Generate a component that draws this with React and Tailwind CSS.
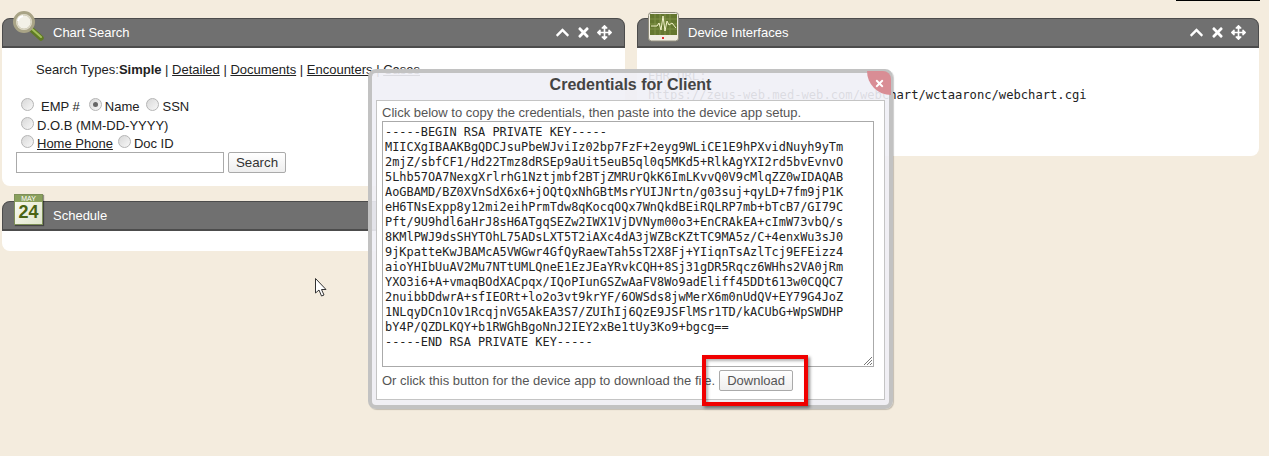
import React from 'react';
import { FaChevronUp, FaTimes, FaArrowsAlt } from 'react-icons/fa';

const keyLines = [
  '-----BEGIN RSA PRIVATE KEY-----',
  'MIICXgIBAAKBgQDCJsuPbeWJviIz02bp7FzF+2eyg9WLiCE1E9hPXvidNuyh9yTm',
  '2mjZ/sbfCF1/Hd22Tmz8dRSEp9aUit5euB5ql0q5MKd5+RlkAgYXI2rd5bvEvnvO',
  '5Lhb57OA7NexgXrlrhG1Nztjmbf2BTjZMRUrQkK6ImLKvvQ0V9cMlqZZ0wIDAQAB',
  'AoGBAMD/BZ0XVnSdX6x6+jOQtQxNhGBtMsrYUIJNrtn/g03suj+qyLD+7fm9jP1K',
  'eH6TNsExpp8y12mi2eihPrmTdw8qKocqOQx7WnQkdBEiRQLRP7mb+bTcB7/GI79C',
  'Pft/9U9hdl6aHrJ8sH6ATgqSEZw2IWX1VjDVNym00o3+EnCRAkEA+cImW73vbQ/s',
  '8KMlPWJ9dsSHYTOhL75ADsLXT5T2iAXc4dA3jWZBcKZtTC9MA5z/C+4enxWu3sJ0',
  '9jKpatteKwJBAMcA5VWGwr4GfQyRaewTah5sT2X8Fj+YIiqnTsAzlTcj9EFEizz4',
  'aioYHIbUuAV2Mu7NTtUMLQneE1EzJEaYRvkCQH+8Sj31gDR5Rqcz6WHhs2VA0jRm',
  'YXO3i6+A+vmaqBOdXACpqx/IQoPIunGSZwAaFV8Wo9adEliff45DDt613w0CQQC7',
  '2nuibbDdwrA+sfIEORt+lo2o3vt9krYF/6OWSds8jwMerX6m0nUdQV+EY79G4JoZ',
  '1NLqyDCn1Ov1RcqjnVG5AkEA3S7/ZUIhIj6QzE9JSFlMSr1TD/kACUbG+WpSWDHP',
  'bY4P/QZDLKQY+b1RWGhBgoNnJ2IEY2xBe1tUy3Ko9+bgcg==',
  '-----END RSA PRIVATE KEY-----',
];

// Little gray radio, the native one doesn't look like the old browser's
const Radio = ({ checked }) => (
  <span className="relative top-[-2px] inline-flex h-[13px] w-[13px] shrink-0 items-center justify-center rounded-full border border-[#b5b5b5] bg-gradient-to-br from-[#d8d8d8] to-[#f8f8f8]">
    {checked && <span className="h-[5px] w-[5px] rounded-full bg-[#666]" />}
  </span>
);

const SearchIcon = () => (
  <svg width="32" height="31" viewBox="0 0 32 31">
    <path d="M18 18 L28 27" stroke="#5f7a24" strokeWidth="5.5" strokeLinecap="round" />
    <path d="M19 18 L28 26" stroke="#a3bf5a" strokeWidth="2" strokeLinecap="round" />
    <circle cx="11" cy="11" r="9.5" fill="#e7e3d4" stroke="#a9a486" strokeWidth="3" />
    <circle cx="11" cy="11" r="7" fill="#f3f1e7" stroke="#cfcbb5" strokeWidth="1" />
    <path d="M5 10 A6 6 0 0 1 10 5" stroke="#fff" strokeWidth="2" fill="none" />
  </svg>
);

const CalendarIcon = () => (
  <div className="flex h-[31px] w-[29px] flex-col items-center border border-[#7d8f58] bg-gradient-to-br from-[#fbfbf3] to-[#dfe5cc] shadow-[1px_1px_1px_rgba(0,0,0,0.4)]">
    <div className="h-[7px] w-full bg-[#8aa05c] text-center font-['Liberation_Sans',sans-serif] text-[7px] leading-[7px] text-white">MAY</div>
    <div className="font-['Liberation_Sans',sans-serif] text-[18px] leading-[21px] font-bold text-[#4a6414]">24</div>
  </div>
);

const MonitorIcon = () => (
  <svg width="31" height="30" viewBox="0 0 31 30">
    <rect x="0.5" y="0.5" width="30" height="28.5" rx="3" fill="#f1eee2" stroke="#8f8c7c" />
    <rect x="2" y="2" width="27" height="21" fill="#64772f" />
    <path d="M2 7H29M2 12H29M2 17H29M7 2V23M12 2V23M17 2V23M22 2V23" stroke="#7e9146" strokeWidth="1" />
    <path d="M3 14H9L11 11L13 18L15 4L17 19L19 9L21 13L24 11L28 16" stroke="#f2f2c8" strokeWidth="1" fill="none" />
    <rect x="14" y="25" width="2" height="2" fill="#d33" />
  </svg>
);

const PanelHeader = ({ icon, title }) => (
  <div className="flex h-[30px] items-center rounded-t-[8px] border border-b-2 border-[#4c4c4c] bg-[#707070] pr-[12px] text-white">
    <div className="relative h-full w-[50px] shrink-0">{icon}</div>
    <div className="flex-1 text-[13px]">{title}</div>
    <div className="flex items-center gap-[6px] text-[15px]">
      <FaChevronUp />
      <FaTimes />
      <FaArrowsAlt />
    </div>
  </div>
);

const ChartSearch = () => (
  <div>
    <PanelHeader icon={<div className="absolute top-[-8px] left-[10px]"><SearchIcon /></div>} title="Chart Search" />
    <div className="h-[138px] rounded-b-[8px] bg-white pt-[13px] text-[13px] text-[#222]">
      <div className="pl-[34px] leading-[18px]">
        Search Types:<b>Simple</b> | <u>Detailed</u> | <u>Documents</u> | <u>Encounters</u> | <u>Cases</u>
      </div>
      <div className="mt-[18px] pl-[19px]">
        <div className="flex h-[19px] items-center gap-[3px]">
          <Radio /> <span className="mr-[6px] ml-[4px]">EMP #</span> <Radio checked /> <span className="mr-[4px]">Name</span> <Radio /> <span>SSN</span>
        </div>
        <div className="flex h-[19px] items-center gap-[3px]">
          <Radio /> <span>D.O.B (MM-DD-YYYY)</span>
        </div>
        <div className="flex h-[17px] items-center gap-[3px]">
          <Radio /> <u className="mr-[2px]">Home Phone</u> <Radio /> <span>Doc ID</span>
        </div>
      </div>
      <div className="flex items-center gap-[4px] pl-[14px]">
        <div className="h-[21px] w-[208px] border border-[#aaa] bg-white" />
        <div className="flex h-[21px] w-[58px] items-center justify-center rounded-[2px] border border-[#aaa] bg-gradient-to-b from-white to-[#eee] text-[13.33px] text-[#333]">Search</div>
      </div>
    </div>
  </div>
);

const Schedule = () => (
  <div className="mt-[15px]">
    <PanelHeader icon={<div className="absolute top-[-8px] left-[11px]"><CalendarIcon /></div>} title="Schedule" />
    <div className="h-[20px] rounded-b-[8px] bg-white" />
  </div>
);

const DeviceInterfaces = () => (
  <div>
    <PanelHeader icon={<div className="absolute top-[-7px] left-[10px]"><MonitorIcon /></div>} title="Device Interfaces" />
    <div className="h-[108px] rounded-b-[8px] bg-white pt-[19px] pl-[11px] font-['DejaVu_Sans_Mono',monospace] text-[12.15px] leading-[19px] text-[#222]">
      <div>EHR URL:</div>
      <div>https://zeus-web.med-web.com/webchart/wctaaronc/webchart.cgi</div>
    </div>
  </div>
);

const CredentialsModal = () => (
  <div className="absolute top-[69px] left-[368px] flex h-[340px] w-[525px] flex-col rounded-[8px] border-[4px] border-[#c2c2c2] bg-[#f0f0f6]/90 shadow-[1px_1px_1px_rgba(0,0,0,0.2)]">
    <div className="relative h-[27px] text-center text-[16px] leading-[24px] font-bold text-[#444]">
      Credentials for Client
      <div className="absolute top-[-2px] right-[-2px] flex h-[24px] w-[24px] items-center justify-center rounded-tr-[8px] rounded-bl-[24px] bg-[#d98d95] text-[11px] text-white">
        <FaTimes />
      </div>
    </div>
    <div className="mx-[4px] mb-[5px] flex-1 border border-[#c4c4c4] bg-white px-[5px] pt-[4px] text-[13px] text-[#555]">
      <div className="leading-[15px]">Click below to copy the credentials, then paste into the device app setup.</div>
      <div className="relative mt-[1px] h-[246px] w-[492px] border border-[#aaa] bg-white pt-[3px] pl-[2px] font-['DejaVu_Sans_Mono',monospace] text-[11.9px] leading-[15px] text-[#222]">
        {keyLines.map((line) => (
          <div key={line}>{line}</div>
        ))}
        <svg className="absolute right-0 bottom-0" width="10" height="10" viewBox="0 0 10 10">
          <path d="M1 9L9 1M4 9L9 4M7 9L9 7" stroke="#777" strokeWidth="1" />
        </svg>
      </div>
      <div className="mt-[3px] flex items-center">
        <span>Or click this button for the device app to download the file.</span>
        <div className="ml-[4px] flex h-[21px] w-[74px] items-center justify-center rounded-[2px] border border-[#aaa] bg-gradient-to-b from-white to-[#eee] text-[#555]">Download</div>
      </div>
    </div>
  </div>
);

const App = () => {
  return (
    <div className="relative h-[456px] w-[1269px] overflow-hidden bg-[#f4ecde] font-['Liberation_Sans',Arial,sans-serif]">
      <div className="ml-[1176px] h-px w-[84px] bg-black" />
      <div className="mt-[17px] flex gap-[12px] pl-[2px]">
        <div className="w-[623px]">
          <ChartSearch />
          <Schedule />
        </div>
        <div className="w-[622px]">
          <DeviceInterfaces />
        </div>
      </div>

      <CredentialsModal />

      {/* red highlight drawn on the screenshot */}
      <div className="absolute top-[355px] left-[702px] h-[51px] w-[106px] border-[4px] border-[#f00000] shadow-[2px_2px_3px_rgba(0,0,0,0.45),inset_2px_2px_3px_rgba(0,0,0,0.3)]" />

      {/* mouse pointer */}
      <svg className="absolute top-[277px] left-[314px]" width="15" height="21" viewBox="0 0 15 21">
        <path d="M1.5 1.5V16L5 13L7.5 19L10 18L7.5 12.5H12Z" fill="#fff" stroke="#333" strokeWidth="1" />
      </svg>
    </div>
  );
};

export default App;
